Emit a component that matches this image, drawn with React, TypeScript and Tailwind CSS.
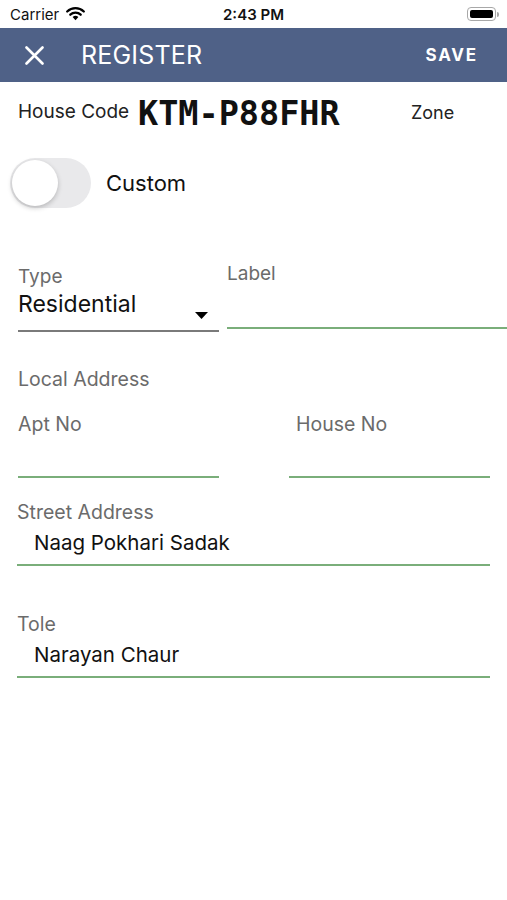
import React from "react";

const sans = { fontFamily: "Inter, 'Noto Sans', sans-serif" };

function Wifi() {
  return (
    <svg width="21" height="15" viewBox="0 0 21 15">
      <path d="M10.5 14.2 L7.6 11.1 A4.2 4.2 0 0 1 13.4 11.1 Z" fill="#000" />
      <path d="M5.3 8.7 A7.6 7.6 0 0 1 15.7 8.7" fill="none" stroke="#000" strokeWidth="2.3" strokeLinecap="round" />
      <path d="M2.2 5.5 A12 12 0 0 1 18.8 5.5" fill="none" stroke="#000" strokeWidth="2.3" strokeLinecap="round" />
    </svg>
  );
}

function Battery() {
  return (
    <div className="flex items-center">
      <div className="w-[29px] h-[14px] rounded-[4px] border border-[#a8a8a8] p-[2px]">
        <div className="w-full h-full rounded-[2px] bg-black" />
      </div>
      <div className="w-[2px] h-[5px] rounded-r-sm bg-[#a8a8a8] ml-[1px]" />
    </div>
  );
}

function Field({ label, value, className = "" }: { label: string; value?: string; className?: string }) {
  return (
    <div className={className}>
      <div className="h-[22px] leading-[22px] text-[19.5px] text-[#6b6b6b]">{label}</div>
      <div className="h-[43px] flex items-center pl-[17px] text-[20.5px] text-[#111] border-b-2 border-[#7aae7a]">
        {value}
      </div>
    </div>
  );
}

export default function App() {
  return (
    <div className="w-[507px] h-[900px] bg-white overflow-hidden" style={sans}>
      {/* Status bar */}
      <div className="relative h-[28px] flex items-center pl-[10px] pr-[8px]">
        <span className="text-[15px] text-[#111] leading-none">Carrier</span>
        <span className="ml-[6px] mt-[-2px]"><Wifi /></span>
        <span className="absolute left-0 right-0 text-center text-[15px] font-semibold text-[#111] leading-none">2:43 PM</span>
        <span className="ml-auto"><Battery /></span>
      </div>

      {/* Header */}
      <div className="h-[54px] bg-[#4f6187] flex items-center text-white">
        <div className="w-[81px] pl-[25px] flex items-center">
          <svg width="19" height="19" viewBox="0 0 19 19">
            <path d="M1.5 1.5 L17.5 17.5 M17.5 1.5 L1.5 17.5" stroke="#fff" strokeWidth="2.6" strokeLinecap="round" />
          </svg>
        </div>
        <span className="text-[25px] leading-none tracking-[0.2px]">REGISTER</span>
        <span className="ml-auto mr-[29px] text-[17px] font-bold tracking-[1.8px] leading-none">SAVE</span>
      </div>

      {/* House code */}
      <div className="h-[60px] flex items-center pl-[18px] pt-[3px]">
        <span className="w-[120px] text-[19px] text-[#222] mt-[-3px]">House Code</span>
        <span
          className="w-[273px] text-[33.5px] font-bold text-[#111] mt-[2px]"
          style={{ fontFamily: "'DejaVu Sans Mono', 'Liberation Mono', monospace" }}
        >
          KTM-P88FHR
        </span>
        <span className="text-[18px] text-[#222] mt-[-3px]">Zone</span>
      </div>

      {/* Custom switch */}
      <div className="mt-[16px] flex items-center pl-[10px]">
        <div className="w-[81px] h-[50px] rounded-full bg-[#e9e9eb] p-[2px] flex items-center">
          <div className="w-[46px] h-[46px] rounded-full bg-white shadow-[0_2px_5px_rgba(0,0,0,0.22)]" />
        </div>
        <span className="ml-[15px] text-[22px] text-[#111] mt-[1px]">Custom</span>
      </div>

      {/* Type / Label */}
      <div className="mt-[55px] flex">
        <div className="ml-[18px] w-[201px] mt-[3px]">
          <div className="h-[22px] leading-[22px] text-[19px] text-[#6b6b6b]">Type</div>
          <div className="h-[44px] flex border-b-2 border-[#7a7a7a]">
            <span className="text-[23px] text-[#111] leading-[26px] mt-[3px]">Residential</span>
            <svg className="ml-auto mr-[11px] mt-[24px]" width="13" height="7" viewBox="0 0 13 7">
              <path d="M0 0 L13 0 L6.5 7 Z" fill="#000" />
            </svg>
          </div>
        </div>
        <div className="ml-[8px] flex-1">
          <div className="h-[22px] leading-[22px] text-[19px] text-[#6b6b6b]">Label</div>
          <div className="h-[44px] border-b-2 border-[#7aae7a]" />
        </div>
      </div>

      {/* Local address */}
      <div className="mt-[36px] ml-[18px] h-[22px] leading-[22px] text-[19.5px] text-[#6b6b6b]">Local Address</div>

      <div className="mt-[23px] flex ml-[18px]">
        <div className="w-[201px]">
          <div className="h-[22px] leading-[22px] text-[19.5px] text-[#6b6b6b]">Apt No</div>
          <div className="h-[43px] border-b-2 border-[#7aae7a]" />
        </div>
        <div className="ml-[70px] w-[201px]">
          <div className="h-[22px] leading-[22px] text-[19.5px] text-[#6b6b6b] pl-[7px]">House No</div>
          <div className="h-[43px] border-b-2 border-[#7aae7a]" />
        </div>
      </div>

      <div className="mx-[17px] mt-[23px]">
        <Field label="Street Address" value="Naag Pokhari Sadak" />
        <Field label="Tole" value="Narayan Chaur" className="mt-[47px]" />
      </div>
    </div>
  );
}
